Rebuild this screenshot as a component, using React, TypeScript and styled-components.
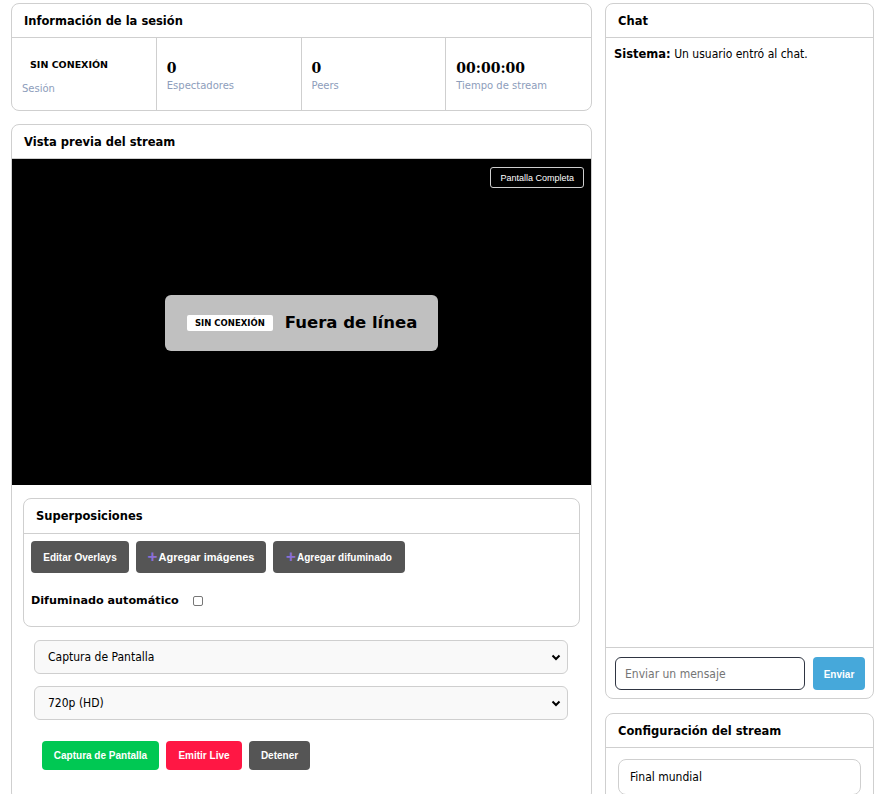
import React from "react";
import styled, { createGlobalStyle } from "styled-components";

const Global = createGlobalStyle`
  html, body { margin: 0; padding: 0; background: #fff; }
  body { font-family: "DejaVu Sans", Verdana, sans-serif; color: #000; }
  * { box-sizing: border-box; }
`;

const Page = styled.div`
  display: grid;
  grid-template-columns: 581px 269px;
  column-gap: 13px;
  padding: 3px 7px 0 11px;
  align-items: start;
`;

const Column = styled.div<{ $gap: number }>`
  display: flex;
  flex-direction: column;
  gap: ${(p) => p.$gap}px;
`;

const Card = styled.section<{ $height?: number; $pb?: number }>`
  border: 1px solid #cfcfcf;
  border-radius: 8px;
  background: #fff;
  overflow: hidden;
  display: flex;
  flex-direction: column;
  padding-bottom: ${(p) => p.$pb ?? 0}px;
  ${(p) => (p.$height ? `height: ${p.$height}px;` : "")}
`;

const CardHeader = styled.div<{ $h?: number }>`
  height: ${(p) => p.$h ?? 34}px;
  border-bottom: 1px solid #cfcfcf;
  display: flex;
  align-items: center;
  padding: 0 12px;
  font-size: 11.5px;
  font-weight: bold;
`;

const Stats = styled.div`
  display: grid;
  grid-template-columns: repeat(4, 1fr);
  height: 72px;
`;

const Stat = styled.div<{ $pt?: number }>`
  border-right: 1px solid #cfcfcf;
  padding: ${(p) => p.$pt ?? 22}px 10px 0;
  display: flex;
  flex-direction: column;
  &:last-child { border-right: none; }
`;

const StatValue = styled.div`
  font-family: "DejaVu Serif", Georgia, serif;
  font-weight: bold;
  font-size: 14px;
  line-height: 17px;
`;

const StatLabel = styled.div<{ $mt?: number }>`
  font-size: 10px;
  color: #8d9dbb;
  margin-top: ${(p) => p.$mt ?? 3}px;
`;

const Badge = styled.span<{ $size?: number; $px?: number }>`
  display: inline-block;
  align-self: flex-start;
  flex-shrink: 0;
  white-space: nowrap;
  background: #fff;
  font-weight: bold;
  font-size: ${(p) => p.$size ?? 10}px;
  padding: 3px ${(p) => p.$px ?? 8}px;
  border-radius: 2px;
  color: #000;
`;

const Video = styled.div`
  position: relative;
  background: #000;
  aspect-ratio: 16 / 9;
  display: flex;
  align-items: center;
  justify-content: center;
`;

const FullButton = styled.button`
  position: absolute;
  top: 8px;
  right: 7px;
  background: #000;
  color: #fff;
  border: 1px solid #cfcfcf;
  border-radius: 3px;
  font-family: "Liberation Sans", Arial, sans-serif;
  font-size: 9px;
  height: 21px;
  padding: 0 9px;
`;

const OfflineBox = styled.div`
  background: #c0c0c0;
  border-radius: 6px;
  width: 273px;
  height: 56px;
  display: flex;
  align-items: center;
  gap: 12px;
  padding: 0 22px;
  margin-top: 2px;
  white-space: nowrap;
  & > ${Badge} { align-self: center; }
`;

const OfflineText = styled.span`
  font-weight: bold;
  font-size: 16.5px;
`;

const SubCard = styled.div`
  margin: 13px 11px 0;
  border: 1px solid #cfcfcf;
  border-radius: 8px;
`;

const Row = styled.div<{ $gap?: number; $pad?: string }>`
  display: flex;
  align-items: center;
  gap: ${(p) => p.$gap ?? 8}px;
  padding: ${(p) => p.$pad ?? "0"};
`;

const Btn = styled.button<{ $bg: string; $h?: number; $fs?: number; $w?: number }>`
  background: ${(p) => p.$bg};
  color: #fff;
  border: none;
  border-radius: 4px;
  font-family: "Liberation Sans", Arial, sans-serif;
  font-weight: bold;
  font-size: ${(p) => p.$fs ?? 10}px;
  height: ${(p) => p.$h ?? 32}px;
  width: ${(p) => p.$w ?? 80}px;
  display: inline-flex;
  align-items: center;
  justify-content: center;
  white-space: nowrap;
  padding: 1px 0 0;
`;

const Plus = styled.span`
  color: #8b6fd6;
  font-size: 17px;
  line-height: 12px;
  font-weight: bold;
  margin-right: 1px;
`;

const CheckLabel = styled.label`
  font-weight: bold;
  font-size: 11.2px;
  line-height: 14px;
  display: flex;
  align-items: center;
  gap: 14px;
`;

const Check = styled.span`
  width: 10px;
  height: 10px;
  border: 1px solid #777;
  border-radius: 2px;
  background: #fff;
`;

const Controls = styled.div`
  display: flex;
  flex-direction: column;
  gap: 12px;
  padding: 13px 23px 0 22px;
`;

const SelectBox = styled.div`
  height: 34px;
  border: 1px solid #cfcfcf;
  border-radius: 6px;
  background: #f9f9f9;
  display: flex;
  align-items: center;
  justify-content: space-between;
  padding: 0 5px 0 13px;
  font-family: "DejaVu Sans Condensed", "DejaVu Sans", sans-serif;
  font-size: 12px;
`;

const ActionRow = styled.div`
  display: flex;
  gap: 7px;
  padding: 21px 0 0 30px;
`;

const ChatBody = styled.div`
  flex: 1;
  padding: 9px 8px;
  font-family: "DejaVu Sans Condensed", "DejaVu Sans", sans-serif;
  font-size: 12px;
  b { font-family: "DejaVu Sans", sans-serif; font-size: 11.5px; }
`;

const ChatFooter = styled.div`
  border-top: 1px solid #cfcfcf;
  display: flex;
  gap: 8px;
  padding: 9px 8px 8px 9px;
`;

const ChatInput = styled.div`
  flex: 1;
  height: 33px;
  border: 1px solid #2f3542;
  border-radius: 6px;
  display: flex;
  align-items: center;
  padding: 0 9px;
  font-family: "DejaVu Sans Condensed", "DejaVu Sans", sans-serif;
  font-size: 12px;
  color: #757575;
`;

const TextField = styled.div`
  margin: 11px 12px 12px;
  height: 36px;
  border: 1px solid #cfcfcf;
  border-radius: 8px;
  display: flex;
  align-items: center;
  padding: 0 11px;
  font-family: "DejaVu Sans Condensed", "DejaVu Sans", sans-serif;
  font-size: 12px;
`;

const Chevron = () => (
  <svg width="12" height="12" viewBox="0 0 12 12">
    <path d="M2.5 4.5 L6 8 L9.5 4.5" fill="none" stroke="#000" strokeWidth="2" />
  </svg>
);

export default function App() {
  return (
    <>
      <Global />
      <Page>
        <Column $gap={13}>
          <Card>
            <CardHeader>Información de la sesión</CardHeader>
            <Stats>
              <Stat $pt={18}>
                <Badge $size={9.5}>SIN CONEXIÓN</Badge>
                <StatLabel $mt={10}>Sesión</StatLabel>
              </Stat>
              <Stat>
                <StatValue>0</StatValue>
                <StatLabel>Espectadores</StatLabel>
              </Stat>
              <Stat>
                <StatValue>0</StatValue>
                <StatLabel>Peers</StatLabel>
              </Stat>
              <Stat>
                <StatValue>00:00:00</StatValue>
                <StatLabel>Tiempo de stream</StatLabel>
              </Stat>
            </Stats>
          </Card>
          <Card $pb={30}>
            <CardHeader>Vista previa del stream</CardHeader>
            <Video>
              <FullButton>Pantalla Completa</FullButton>
              <OfflineBox>
                <Badge $size={8.5} $px={8}>SIN CONEXIÓN</Badge>
                <OfflineText>Fuera de línea</OfflineText>
              </OfflineBox>
            </Video>
            <SubCard>
              <CardHeader $h={35}>Superposiciones</CardHeader>
              <Row $gap={7} $pad="7px 8px 0 7px">
                <Btn $bg="#555555" $w={98}>Editar Overlays</Btn>
                <Btn $bg="#555555" $w={130} $fs={11}>
                  <Plus>+</Plus>Agregar imágenes
                </Btn>
                <Btn $bg="#555555" $w={132}>
                  <Plus>+</Plus>Agregar difuminado
                </Btn>
              </Row>
              <Row $pad="21px 8px 18px 7px">
                <CheckLabel>
                  Difuminado automático <Check />
                </CheckLabel>
              </Row>
            </SubCard>
            <Controls>
              <SelectBox>
                Captura de Pantalla <Chevron />
              </SelectBox>
              <SelectBox>
                720p (HD) <Chevron />
              </SelectBox>
            </Controls>
            <ActionRow>
              <Btn $bg="#00c853" $h={29} $w={117}>Captura de Pantalla</Btn>
              <Btn $bg="#ff1744" $h={29} $w={76}>Emitir Live</Btn>
              <Btn $bg="#555555" $h={29} $w={61}>Detener</Btn>
            </ActionRow>
          </Card>
        </Column>
        <Column $gap={14}>
          <Card $height={696}>
            <CardHeader>Chat</CardHeader>
            <ChatBody>
              <b>Sistema:</b> Un usuario entró al chat.
            </ChatBody>
            <ChatFooter>
              <ChatInput>Enviar un mensaje</ChatInput>
              <Btn $bg="#46a8da" $h={33} $w={52}>Enviar</Btn>
            </ChatFooter>
          </Card>
          <Card>
            <CardHeader>Configuración del stream</CardHeader>
            <TextField>Final mundial</TextField>
          </Card>
        </Column>
      </Page>
    </>
  );
}
